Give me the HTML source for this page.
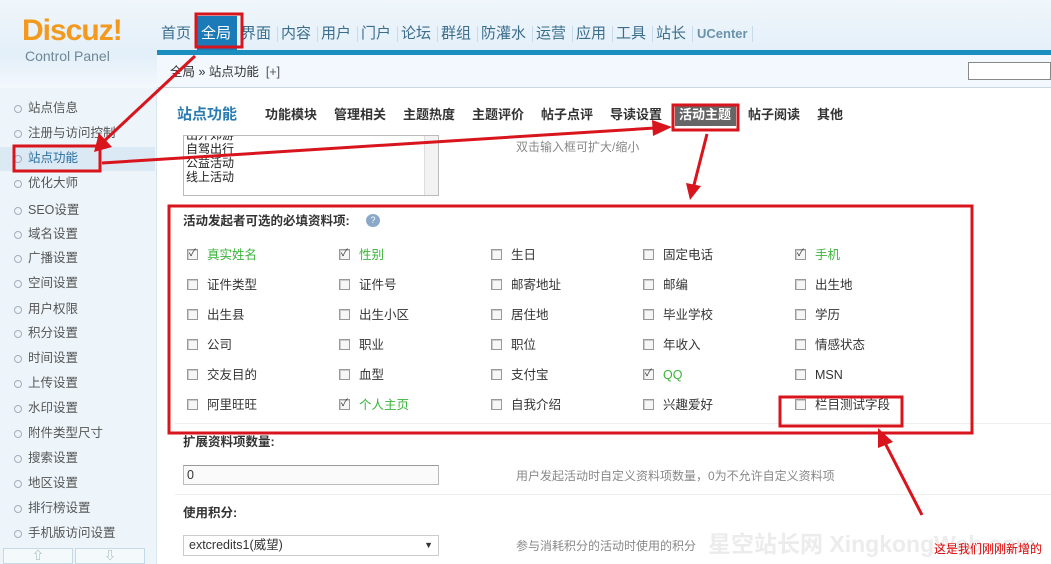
<!DOCTYPE html>
<html><head><meta charset="utf-8">
<style>
*{margin:0;padding:0;box-sizing:border-box}
body{width:1051px;height:564px;overflow:hidden;position:relative;background:#fff;font-family:"Liberation Sans","Noto Sans CJK SC",sans-serif;font-size:12px;color:#333;line-height:14px}
.a{position:absolute;white-space:nowrap}
#hd{left:0;top:0;width:1051px;height:55px;background:linear-gradient(#f0f6fb,#e3eff9)}
#bar{left:157px;top:50px;width:894px;height:5px;background:#1b8ec0}
.nav{top:24px;font-size:15px;color:#3b6d8c;line-height:20px}
.sep{top:26px;width:1px;height:16px;background:#c9dbe8}
#side{left:0;top:88px;width:157px;height:476px;background:#edf5fb;border-right:1px solid #d7e6f1}
#crumb{left:157px;top:55px;width:894px;height:33px;background:#f2f8fd;border-bottom:1px solid #c8d6e0}
.si{left:0;width:155px;height:25px;line-height:25px;font-size:12.5px;color:#555;padding-left:28px}
.si:before{content:"";position:absolute;left:14px;top:9px;width:6px;height:6px;border:1px solid #aab;border-radius:50%}
.tab{top:107px;font-size:13px;font-weight:bold;color:#333;line-height:16px}
.cb{width:11px;height:11px;border:1px solid #999;background:#f6f6f6;box-shadow:inset 1px 1px 0 #ccc}
.ck:after{content:"✓";position:absolute;left:1px;top:-2px;font-size:10px;line-height:12px;color:#333}
.lb{font-size:12.5px;color:#333;line-height:14px}
.g{color:#3bb33b}
</style></head><body>
<div class="a" id="hd"></div>
<div class="a" style="left:0;top:55px;width:157px;height:33px;background:linear-gradient(#e3eff9,#f3f8fc)"></div>
<div class="a" style="left:22px;top:14px;font-size:30px;font-weight:bold;color:#f39a1e;letter-spacing:-1px;line-height:34px">Discuz!</div>
<div class="a" style="left:25px;top:48px;font-size:14px;color:#6e8796;line-height:16px">Control Panel</div>
<div class="a" id="bar"></div>
<div class="a" style="left:197px;top:16px;width:40px;height:34px;background:#1b7ab8"></div>
<div class="a nav" style="left:161px">首页</div>
<div class="a nav" style="left:201px;color:#fff">全局</div>
<div class="a nav" style="left:241px">界面</div>
<div class="a sep" style="left:277px"></div>
<div class="a nav" style="left:281px">内容</div>
<div class="a sep" style="left:317px"></div>
<div class="a nav" style="left:321px">用户</div>
<div class="a sep" style="left:357px"></div>
<div class="a nav" style="left:361px">门户</div>
<div class="a sep" style="left:397px"></div>
<div class="a nav" style="left:401px">论坛</div>
<div class="a sep" style="left:437px"></div>
<div class="a nav" style="left:441px">群组</div>
<div class="a sep" style="left:477px"></div>
<div class="a nav" style="left:481px">防灌水</div>
<div class="a sep" style="left:532px"></div>
<div class="a nav" style="left:536px">运营</div>
<div class="a sep" style="left:572px"></div>
<div class="a nav" style="left:576px">应用</div>
<div class="a sep" style="left:612px"></div>
<div class="a nav" style="left:616px">工具</div>
<div class="a sep" style="left:652px"></div>
<div class="a nav" style="left:656px">站长</div>
<div class="a sep" style="left:692px"></div>
<div class="a nav" style="left:697px;font-size:13px;font-weight:bold;color:#6a93ab">UCenter</div>
<div class="a sep" style="left:752px"></div>
<div class="a" id="crumb"></div>
<div class="a" style="left:170px;top:65px;font-size:12.5px;color:#333">全局 » 站点功能 &nbsp;<span style="color:#555">[+]</span></div>
<div class="a" style="left:968px;top:62px;width:83px;height:18px;border:1px solid #888;background:#fff"></div>
<div class="a" id="side"></div>
<div class="a" style="left:0;top:147px;width:155px;height:24px;background:#dbe9f5"></div>
<div class="a si" style="top:96px">站点信息</div>
<div class="a si" style="top:121px">注册与访问控制</div>
<div class="a si" style="top:146px;color:#2a6e9e">站点功能</div>
<div class="a si" style="top:171px">优化大师</div>
<div class="a si" style="top:198px">SEO设置</div>
<div class="a si" style="top:222px">域名设置</div>
<div class="a si" style="top:246px">广播设置</div>
<div class="a si" style="top:271px">空间设置</div>
<div class="a si" style="top:297px">用户权限</div>
<div class="a si" style="top:321px">积分设置</div>
<div class="a si" style="top:346px">时间设置</div>
<div class="a si" style="top:371px">上传设置</div>
<div class="a si" style="top:396px">水印设置</div>
<div class="a si" style="top:421px">附件类型尺寸</div>
<div class="a si" style="top:446px">搜索设置</div>
<div class="a si" style="top:471px">地区设置</div>
<div class="a si" style="top:496px">排行榜设置</div>
<div class="a si" style="top:521px">手机版访问设置</div>
<div class="a" style="left:3px;top:548px;width:70px;height:16px;border:1px solid #c5d8e6;background:#f4f9fc;text-align:center;color:#8aa;font-size:11px;line-height:14px">⇧</div>
<div class="a" style="left:75px;top:548px;width:70px;height:16px;border:1px solid #c5d8e6;background:#f4f9fc;text-align:center;color:#8aa;font-size:11px;line-height:14px">⇩</div>

<div class="a" style="left:177px;top:106px;font-size:15px;font-weight:bold;color:#2a7cb0;line-height:18px">站点功能</div>
<div class="a tab" style="left:265px">功能模块</div>
<div class="a tab" style="left:334px">管理相关</div>
<div class="a tab" style="left:403px">主题热度</div>
<div class="a tab" style="left:472px">主题评价</div>
<div class="a tab" style="left:541px">帖子点评</div>
<div class="a tab" style="left:610px">导读设置</div>
<div class="a" style="left:675px;top:106px;width:61px;height:20px;background:#666"></div>
<div class="a tab" style="left:679px;color:#fff">活动主题</div>
<div class="a tab" style="left:748px">帖子阅读</div>
<div class="a tab" style="left:817px">其他</div>

<div class="a" style="left:183px;top:135px;width:256px;height:61px;border:1px solid #bbb;overflow:hidden;background:#fff">
<div style="position:absolute;left:2px;top:-8px;font-size:12px;line-height:14px;color:#222">出外郊游<br>自驾出行<br>公益活动<br>线上活动</div>
<div style="position:absolute;right:0;top:0;width:14px;height:59px;background:#f2f2f2;border-left:1px solid #ddd"></div>
</div>
<div class="a" style="left:516px;top:140px;color:#888">双击输入框可扩大/缩小</div>

<div class="a" style="left:183px;top:214px;font-weight:bold;font-size:12.5px">活动发起者可选的必填资料项:</div>
<div class="a" style="left:366px;top:214px;width:14px;height:13px;border-radius:50%;background:#8aa8c8;color:#fff;font-size:9px;text-align:center;line-height:13px">?</div>

<div class="a cb ck" style="left:187px;top:249px"></div><div class="a lb g" style="left:207px;top:248px">真实姓名</div>
<div class="a cb ck" style="left:339px;top:249px"></div><div class="a lb g" style="left:359px;top:248px">性别</div>
<div class="a cb" style="left:491px;top:249px"></div><div class="a lb" style="left:511px;top:248px">生日</div>
<div class="a cb" style="left:643px;top:249px"></div><div class="a lb" style="left:663px;top:248px">固定电话</div>
<div class="a cb ck" style="left:795px;top:249px"></div><div class="a lb g" style="left:815px;top:248px">手机</div>

<div class="a cb" style="left:187px;top:279px"></div><div class="a lb" style="left:207px;top:278px">证件类型</div>
<div class="a cb" style="left:339px;top:279px"></div><div class="a lb" style="left:359px;top:278px">证件号</div>
<div class="a cb" style="left:491px;top:279px"></div><div class="a lb" style="left:511px;top:278px">邮寄地址</div>
<div class="a cb" style="left:643px;top:279px"></div><div class="a lb" style="left:663px;top:278px">邮编</div>
<div class="a cb" style="left:795px;top:279px"></div><div class="a lb" style="left:815px;top:278px">出生地</div>

<div class="a cb" style="left:187px;top:309px"></div><div class="a lb" style="left:207px;top:308px">出生县</div>
<div class="a cb" style="left:339px;top:309px"></div><div class="a lb" style="left:359px;top:308px">出生小区</div>
<div class="a cb" style="left:491px;top:309px"></div><div class="a lb" style="left:511px;top:308px">居住地</div>
<div class="a cb" style="left:643px;top:309px"></div><div class="a lb" style="left:663px;top:308px">毕业学校</div>
<div class="a cb" style="left:795px;top:309px"></div><div class="a lb" style="left:815px;top:308px">学历</div>

<div class="a cb" style="left:187px;top:339px"></div><div class="a lb" style="left:207px;top:338px">公司</div>
<div class="a cb" style="left:339px;top:339px"></div><div class="a lb" style="left:359px;top:338px">职业</div>
<div class="a cb" style="left:491px;top:339px"></div><div class="a lb" style="left:511px;top:338px">职位</div>
<div class="a cb" style="left:643px;top:339px"></div><div class="a lb" style="left:663px;top:338px">年收入</div>
<div class="a cb" style="left:795px;top:339px"></div><div class="a lb" style="left:815px;top:338px">情感状态</div>

<div class="a cb" style="left:187px;top:369px"></div><div class="a lb" style="left:207px;top:368px">交友目的</div>
<div class="a cb" style="left:339px;top:369px"></div><div class="a lb" style="left:359px;top:368px">血型</div>
<div class="a cb" style="left:491px;top:369px"></div><div class="a lb" style="left:511px;top:368px">支付宝</div>
<div class="a cb ck" style="left:643px;top:369px"></div><div class="a lb g" style="left:663px;top:368px">QQ</div>
<div class="a cb" style="left:795px;top:369px"></div><div class="a lb" style="left:815px;top:368px">MSN</div>

<div class="a cb" style="left:187px;top:399px"></div><div class="a lb" style="left:207px;top:398px">阿里旺旺</div>
<div class="a cb ck" style="left:339px;top:399px"></div><div class="a lb g" style="left:359px;top:398px">个人主页</div>
<div class="a cb" style="left:491px;top:399px"></div><div class="a lb" style="left:511px;top:398px">自我介绍</div>
<div class="a cb" style="left:643px;top:399px"></div><div class="a lb" style="left:663px;top:398px">兴趣爱好</div>
<div class="a cb" style="left:795px;top:399px"></div><div class="a lb" style="left:815px;top:398px">栏目测试字段</div>

<div class="a" style="left:175px;top:423px;width:876px;height:1px;background:#eee"></div>
<div class="a" style="left:183px;top:435px;font-weight:bold;font-size:12.5px">扩展资料项数量:</div>
<div class="a" style="left:183px;top:465px;width:256px;height:20px;border:1px solid #bbb;border-top-color:#999;background:#fafafa;padding-left:3px;line-height:18px;font-size:12.5px">0</div>
<div class="a" style="left:516px;top:469px;color:#888">用户发起活动时自定义资料项数量，0为不允许自定义资料项</div>
<div class="a" style="left:175px;top:494px;width:876px;height:1px;background:#eee"></div>
<div class="a" style="left:183px;top:506px;font-weight:bold;font-size:12.5px">使用积分:</div>
<div class="a" style="left:183px;top:535px;width:256px;height:21px;border:1px solid #ccc;background:#fff;padding-left:5px;line-height:19px;font-size:12.5px">extcredits1(威望)<span style="position:absolute;right:5px;font-size:9px">▼</span></div>
<div class="a" style="left:516px;top:539px;color:#888">参与消耗积分的活动时使用的积分</div>
<div class="a" style="left:708px;top:530px;font-size:23px;line-height:28px;color:#ececec;font-weight:bold">星空站长网 XingkongWeb.com</div>
<div class="a" style="left:934px;top:542px;font-size:12px;color:#d00">这是我们刚刚新增的</div>

<svg class="a" style="left:0;top:0" width="1051" height="564">
<g fill="none" stroke="#d8141c" stroke-width="3">
<rect x="196" y="14" width="46" height="33"/>
<rect x="14" y="146" width="86" height="25"/>
<rect x="673" y="105" width="65" height="25"/>
<rect x="169" y="206" width="803" height="227"/>
<rect x="780" y="397" width="122" height="29"/>
<line x1="195" y1="56" x2="102" y2="143"/>
<line x1="102" y1="163" x2="655" y2="128"/>
<line x1="707" y1="134" x2="694" y2="185"/>
<line x1="922" y1="515" x2="885" y2="443"/>
</g>
<g fill="#d8141c">
<polygon points="94,152 99,133 112,147"/>
<polygon points="672,127 652,120 653,136"/>
<polygon points="690,200 686,183 701,186"/>
<polygon points="878,428 878,448 893,442"/>
</g>
</svg>
</body></html>
